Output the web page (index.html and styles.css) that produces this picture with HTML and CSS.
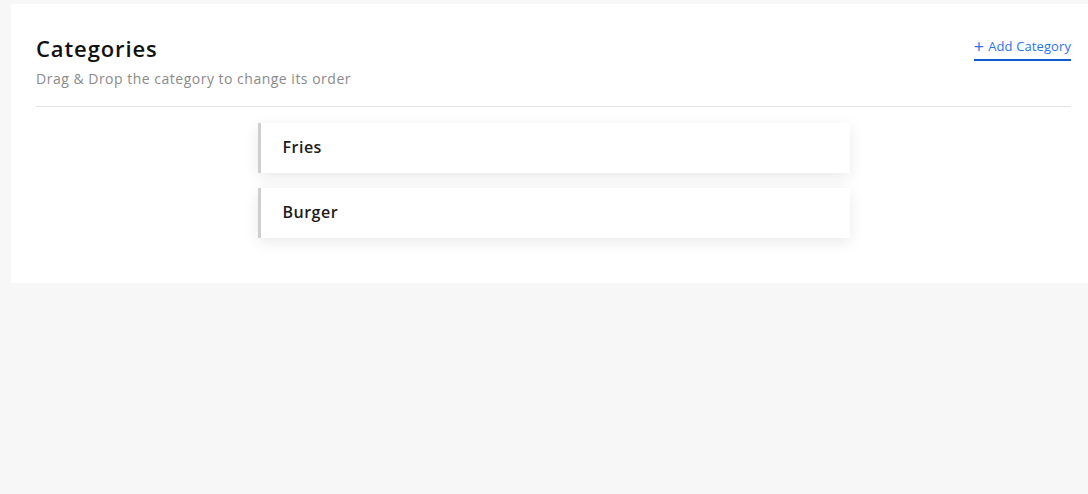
FILE: index.html
```html
<!DOCTYPE html>
<html>
<head>
<meta charset="utf-8">
<link rel="stylesheet" href="styles.css">
</head>
<body>
<div class="card">
  <div class="header">
    <div class="titles">
      <h1 class="title">Categories</h1>
      <p class="subtitle">Drag &amp; Drop the category to change its order</p>
    </div>
    <a class="add-link" href="#"><span class="plus">+</span>Add Category</a>
  </div>
  <div class="list">
    <div class="item">Fries</div>
    <div class="item">Burger</div>
  </div>
</div>
</body>
</html>
```
FILE: styles.css
```css
html, body {
  margin: 0;
  padding: 0;
  background: #f7f7f7;
  font-family: "Open Sans", "Noto Sans", sans-serif;
  overflow: hidden;
}
.card {
  background: #ffffff;
  margin: 4px 0 0 11px;
  padding: 30px 17px 45px 25px;
}
.header {
  display: flex;
  justify-content: space-between;
  align-items: flex-start;
  border-bottom: 1px solid #e4e4e4;
  padding-bottom: 18px;
}
.title {
  margin: 0;
  font-size: 22px;
  font-weight: 600;
  color: #111;
  line-height: 28px;
  letter-spacing: 0.9px;
}
.subtitle {
  margin: 8px 0 0;
  font-size: 14px;
  color: #8a8a8a;
  line-height: 18px;
  letter-spacing: 0.5px;
}
.add-link {
  margin-top: 4px;
  color: #2a74e8;
  font-size: 13px;
  text-decoration: none;
  border-bottom: 2px solid #0d5ccb;
  padding-bottom: 5px;
  line-height: 16px;
  display: flex;
  align-items: center;
  letter-spacing: 0.1px;
}
.plus {
  font-size: 18px;
  margin-right: 4px;
  line-height: 16px;
}
.list {
  display: flex;
  flex-direction: column;
  align-items: center;
  gap: 15px;
  padding-top: 16px;
}
.item {
  width: 592px;
  height: 50px;
  box-sizing: border-box;
  border-left: 3px solid #cfcfcf;
  padding-left: 22px;
  padding-bottom: 2px;
  display: flex;
  align-items: center;
  font-size: 16px;
  font-weight: 600;
  color: #1c1c1c;
  letter-spacing: 0.5px;
  background: #fff;
  box-shadow: 0 4px 14px rgba(0, 0, 0, 0.09);
}
```
